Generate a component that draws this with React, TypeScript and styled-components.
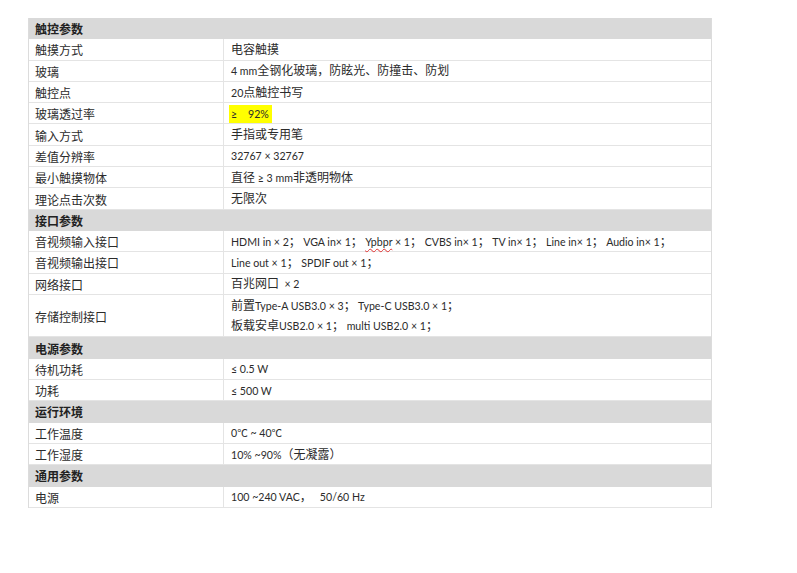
import React from "react";
import styled, { createGlobalStyle } from "styled-components";

const Global = createGlobalStyle`
  html, body { margin: 0; padding: 0; background: #ffffff; }
  body {
    font-family: Lato, "Noto Sans CJK SC", sans-serif;
    color: #2b2b2b;
  }
`;

const Page = styled.div`
  padding: 18px 0 0 28px;
  width: 797px;
  height: 573px;
  box-sizing: border-box;
`;

const Table = styled.div`
  width: 684px;
  border-left: 1px solid #dcdcdc;
  border-right: 1px solid #dcdcdc;
  box-sizing: border-box;
  display: flex;
  flex-direction: column;
`;

const Section = styled.div`
  height: 21.3px;
  background: #d9d9d9;
  display: flex;
  align-items: center;
  padding-left: 6px;
  font-size: 12px;
  font-weight: bold;
  color: #222;
  box-sizing: border-box;
`;

const Row = styled.div<{ $lines?: number }>`
  display: grid;
  grid-template-columns: 195px 1fr;
  height: ${(p) => 21.3 * (p.$lines ?? 1)}px;
  border-bottom: 1px solid #e4e4e4;
  box-sizing: border-box;
  font-size: 12px;
`;

const Label = styled.div`
  display: flex;
  align-items: center;
  padding: 1px 0 0 6px;
  border-right: 1px solid #e4e4e4;
  white-space: nowrap;
`;

const Value = styled.div`
  display: flex;
  flex-direction: column;
  justify-content: space-around;
  padding: 1px 0 0 7px;
  white-space: pre;
`;

const Line = styled.div`
  line-height: 16px;
`;

const Latin = styled.span`
  font-size: 10.6px;
`;

const Mark = styled.span`
  background: #ffff00;
  display: inline-block;
  line-height: 17px;
  margin-left: -2px;
  padding: 0 3px 0 2px;
`;

const Squiggle = styled.span`
  text-decoration: underline wavy #e03030;
  text-decoration-thickness: 1px;
  text-underline-offset: 2px;
`;

const CJK = /([\u3000-\u303f\u4e00-\u9fff\uff00-\uffef]+)/;

function Mixed({ text }: { text: string }) {
  const parts = text.split(CJK);
  return (
    <>
      {parts.map((p, i) =>
        p === "" ? null : i % 2 === 1 ? (
          <React.Fragment key={i}>{p}</React.Fragment>
        ) : (
          <Latin key={i}>{p}</Latin>
        )
      )}
    </>
  );
}

type Item = { label: string; value: React.ReactNode[]; lines?: number };
type Group = { title: string; items: Item[] };

const t = (s: string) => <Mixed text={s} />;

const groups: Group[] = [
  {
    title: "触控参数",
    items: [
      { label: "触摸方式", value: [t("电容触摸")] },
      { label: "玻璃", value: [t("4 mm全钢化玻璃，防眩光、防撞击、防划")] },
      { label: "触控点", value: [t("20点触控书写")] },
      {
        label: "玻璃透过率",
        value: [
          <Mark key="m">
            <Latin>≥    92%</Latin>
          </Mark>,
        ],
      },
      { label: "输入方式", value: [t("手指或专用笔")] },
      { label: "差值分辨率", value: [t("32767 × 32767")] },
      { label: "最小触摸物体", value: [t("直径 ≥ 3 mm非透明物体")] },
      { label: "理论点击次数", value: [t("无限次")] },
    ],
  },
  {
    title: "接口参数",
    items: [
      {
        label: "音视频输入接口",
        value: [
          <span key="a">
            {t("HDMI in × 2； VGA in× 1； ")}
            <Latin>
              <Squiggle>Ypbpr</Squiggle>
            </Latin>
            {t(" × 1； CVBS in× 1； TV in× 1； Line in× 1； Audio in× 1；")}
          </span>,
        ],
      },
      { label: "音视频输出接口", value: [t("Line out × 1； SPDIF out × 1；")] },
      { label: "网络接口", value: [t("百兆网口  × 2")] },
      {
        label: "存储控制接口",
        lines: 2,
        value: [
          t("前置Type-A USB3.0 × 3； Type-C USB3.0 × 1；"),
          t("板载安卓USB2.0 × 1； multi USB2.0 × 1；"),
        ],
      },
    ],
  },
  {
    title: "电源参数",
    items: [
      { label: "待机功耗", value: [t("≤ 0.5 W")] },
      { label: "功耗", value: [t("≤ 500 W")] },
    ],
  },
  {
    title: "运行环境",
    items: [
      { label: "工作温度", value: [<Latin key="c">0℃ ~ 40℃</Latin>] },
      { label: "工作湿度", value: [t("10% ~90%（无凝露）")] },
    ],
  },
  {
    title: "通用参数",
    items: [{ label: "电源", value: [t("100 ~240 VAC，   50/60 Hz")] }],
  },
];

export default function App() {
  return (
    <Page>
      <Global />
      <Table>
        {groups.map((g) => (
          <React.Fragment key={g.title}>
            <Section>{g.title}</Section>
            {g.items.map((it) => (
              <Row key={it.label} $lines={it.lines}>
                <Label>{it.label}</Label>
                <Value>
                  {it.value.map((v, i) => (
                    <Line key={i}>{v}</Line>
                  ))}
                </Value>
              </Row>
            ))}
          </React.Fragment>
        ))}
      </Table>
    </Page>
  );
}
